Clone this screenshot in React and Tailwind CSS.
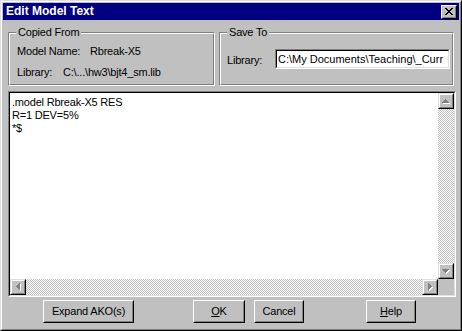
import React from 'react';

function Arrow({ dir }) {
    const rows = [[3, 1], [2, 3], [1, 5], [0, 7]];
    let rects = [];
    if (dir === 'up') rects = rows.map(([x, w], i) => ({ x, y: i, w, h: 1 }));
    if (dir === 'down') rects = rows.map(([x, w], i) => ({ x, y: 3 - i, w, h: 1 }));
    if (dir === 'left') rects = rows.map(([x, w], i) => ({ x: i, y: x, w: 1, h: w }));
    if (dir === 'right') rects = rows.map(([x, w], i) => ({ x: 3 - i, y: x, w: 1, h: w }));
    const vert = dir === 'up' || dir === 'down';
    return (
        <svg width={vert ? 8 : 5} height={vert ? 5 : 8} shapeRendering="crispEdges">
            {rects.map((r, i) => (
                <rect key={'s' + i} x={r.x + 1} y={r.y + 1} width={r.w} height={r.h} fill="#ffffff" />
            ))}
            {rects.map((r, i) => (
                <rect key={i} x={r.x} y={r.y} width={r.w} height={r.h} fill="#808080" />
            ))}
        </svg>
    );
}

function ScrollBtn({ dir }) {
    return (
        <div className="w-[16px] h-[16px] shrink-0 bg-[#c0c0c0] border border-t-[#dfdfdf] border-l-[#dfdfdf] border-b-black border-r-black">
            <div className="w-full h-full border border-t-white border-l-white border-b-[#808080] border-r-[#808080] flex items-center justify-center">
                <Arrow dir={dir} />
            </div>
        </div>
    );
}

function Button({ children, width }) {
    return (
        <div className={`${width} h-[23px] border border-t-white border-l-white border-b-black border-r-black`}>
            <div className="w-full h-full border border-t-[#c0c0c0] border-l-[#c0c0c0] border-b-[#808080] border-r-[#808080] flex items-center justify-center text-[11px] text-black">
                {children}
            </div>
        </div>
    );
}

function Group({ label, width, children }) {
    return (
        <div className={`relative ${width} h-[54px] border border-t-[#808080] border-l-[#808080] border-b-white border-r-white`}>
            <div className="h-full border border-t-white border-l-white border-b-[#808080] border-r-[#808080]">
                {children}
            </div>
            <div className="absolute top-[-7px] left-[7px] px-[2px] bg-[#c0c0c0] leading-[13px] text-[11px]">
                {label}
            </div>
        </div>
    );
}

const dither = 'bg-[repeating-conic-gradient(#c0c0c0_0_25%,#ffffff_0_50%)] bg-[length:2px_2px]';

export default function App() {
    return (
        <div
            className="w-[462px] h-[331px] bg-[#c0c0c0] border border-t-[#dfdfdf] border-l-[#dfdfdf] border-b-black border-r-black text-black tracking-[-0.2px] overflow-hidden"
            style={{ fontFamily: '"Liberation Sans", Arial, sans-serif' }}
        >
            <div className="h-full border border-t-white border-l-white border-b-[#808080] border-r-[#808080] p-px flex flex-col">
                {/* Title bar */}
                <div className="h-[17px] shrink-0 bg-[#000080] flex items-center justify-between pl-[3px] pr-[2px]">
                    <span className="text-white font-bold text-[12px] leading-[17px] tracking-normal">Edit Model Text</span>
                    <div className="w-[16px] h-[14px] bg-[#c0c0c0] border border-t-white border-l-white border-b-black border-r-black">
                        <div className="w-full h-full border border-t-[#c0c0c0] border-l-[#c0c0c0] border-b-[#808080] border-r-[#808080] flex items-center justify-center">
                            <svg width="8" height="7" shapeRendering="crispEdges">
                                <rect x="0" y="0" width="2" height="1" fill="#000" />
                                <rect x="6" y="0" width="2" height="1" fill="#000" />
                                <rect x="1" y="1" width="2" height="1" fill="#000" />
                                <rect x="5" y="1" width="2" height="1" fill="#000" />
                                <rect x="2" y="2" width="4" height="1" fill="#000" />
                                <rect x="3" y="3" width="2" height="1" fill="#000" />
                                <rect x="2" y="4" width="4" height="1" fill="#000" />
                                <rect x="1" y="5" width="2" height="1" fill="#000" />
                                <rect x="5" y="5" width="2" height="1" fill="#000" />
                                <rect x="0" y="6" width="2" height="1" fill="#000" />
                                <rect x="6" y="6" width="2" height="1" fill="#000" />
                            </svg>
                        </div>
                    </div>
                </div>

                {/* Groups */}
                <div className="mt-[12px] flex gap-[4px] pl-[5px] shrink-0">
                    <Group label="Copied From" width="w-[207px]">
                        <div className="flex flex-col gap-[8px] pt-[11px] pl-[7px] text-[11px] leading-[13px]">
                            <div className="flex">
                                <span className="w-[73px]">Model Name:</span>
                                <span>Rbreak-X5</span>
                            </div>
                            <div className="flex">
                                <span className="w-[46px]">Library:</span>
                                <span>C:\...\hw3\bjt4_sm.lib</span>
                            </div>
                        </div>
                    </Group>
                    <Group label="Save To" width="w-[235px]">
                        <div className="h-full flex items-center pl-[6px] pr-[2px] text-[11px] leading-[13px]">
                            <span className="w-[48px] shrink-0 pt-[3px]">Library:</span>
                            <div className="flex-1 min-w-0 h-[20px] border border-t-[#808080] border-l-[#808080] border-b-white border-r-white">
                                <div className="h-full border border-t-black border-l-black border-b-[#dfdfdf] border-r-[#dfdfdf] bg-white overflow-hidden whitespace-nowrap pl-[1px] leading-[16px] tracking-normal">
                                    C:\My Documents\Teaching\_Curr
                                </div>
                            </div>
                        </div>
                    </Group>
                </div>

                {/* Text area */}
                <div className="mt-[5px] ml-[5px] mr-[3px] h-[206px] shrink-0 border border-t-[#808080] border-l-[#808080] border-b-white border-r-white">
                    <div className="h-full border border-t-black border-l-black border-b-[#dfdfdf] border-r-[#dfdfdf] bg-white flex flex-col">
                        <div className="flex flex-1 min-h-0">
                            <div className="flex-1 pt-[3px] pl-[2px] text-[11px] leading-[13px] whitespace-pre">
                                <div>.model Rbreak-X5 RES</div>
                                <div>R=1 DEV=5%</div>
                                <div>*$</div>
                            </div>
                            <div className="w-[16px] flex flex-col">
                                <ScrollBtn dir="up" />
                                <div className={`flex-1 ${dither}`} />
                                <ScrollBtn dir="down" />
                            </div>
                        </div>
                        <div className="h-[16px] flex shrink-0">
                            <ScrollBtn dir="left" />
                            <div className={`flex-1 ${dither}`} />
                            <ScrollBtn dir="right" />
                            <div className="w-[16px] bg-[#c0c0c0]" />
                        </div>
                    </div>
                </div>

                {/* Buttons */}
                <div className="mt-[3px] flex pl-[40px] shrink-0">
                    <Button width="w-[91px]">Expand AKO(s)</Button>
                    <div className="ml-[59px]">
                        <Button width="w-[52px]"><span><span className="underline">O</span>K</span></Button>
                    </div>
                    <div className="ml-[9px]">
                        <Button width="w-[50px]">Cancel</Button>
                    </div>
                    <div className="ml-[62px]">
                        <Button width="w-[50px]"><span><span className="underline">H</span>elp</span></Button>
                    </div>
                </div>
            </div>
        </div>
    );
}
